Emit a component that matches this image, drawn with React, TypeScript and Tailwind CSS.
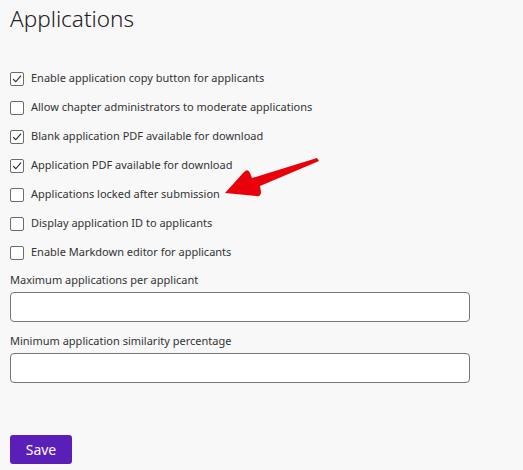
import React from 'react'

const options = [
  { label: 'Enable application copy button for applicants', checked: true },
  { label: 'Allow chapter administrators to moderate applications', checked: false },
  { label: 'Blank application PDF available for download', checked: true },
  { label: 'Application PDF available for download', checked: true },
  { label: 'Applications locked after submission', checked: false },
  { label: 'Display application ID to applicants', checked: false },
  { label: 'Enable Markdown editor for applicants', checked: false },
]

const CheckRow: React.FC<{ label: string; checked: boolean }> = ({ label, checked }) => (
  <label className="flex h-[29px] items-center gap-[7px]">
    <span className="flex h-[14px] w-[14px] items-center justify-center rounded-[2px] border border-[#6b6b6b] bg-white">
      {checked && (
        <svg viewBox="0 0 14 14" className="h-[12px] w-[12px]">
          <path d="M2.5 7.2 L5.6 10.2 L11.6 3" fill="none" stroke="#222" strokeWidth="1.3" />
        </svg>
      )}
    </span>
    <span className="text-[11px] text-[#333]">{label}</span>
  </label>
)

const Field: React.FC<{ label: string }> = ({ label }) => (
  <div className="flex flex-col">
    <span className="text-[11px] leading-[16px] text-[#333]">{label}</span>
    <input className="mt-[4px] h-[30px] w-[460px] rounded-[4px] border border-[#777] bg-white" />
  </div>
)

export default function App() {
  return (
    <div
      className="relative h-[470px] w-[523px] bg-[#f8f8f8] px-[10px]"
      style={{ fontFamily: '"Noto Sans", "Open Sans", sans-serif' }}
    >
      <h1 className="pt-[1px] text-[22.5px] font-light leading-[36px] text-[#222]">Applications</h1>
      <div className="mt-[27px] flex flex-col">
        {options.map((o) => (
          <CheckRow key={o.label} label={o.label} checked={o.checked} />
        ))}
      </div>
      <div className="mt-[5px] flex flex-col gap-[11px]">
        <Field label="Maximum applications per applicant" />
        <Field label="Minimum application similarity percentage" />
      </div>
      <button className="mt-[52px] block h-[29px] w-[62px] rounded-[3px] bg-[#5a1fb8] text-[14px] text-white">
        Save
      </button>
      <svg className="absolute left-[215px] top-[150px]" width="110" height="55" viewBox="0 0 110 55">
        <path
          d="M10 43 L29 22 Q33 18 35 23 L37 28 L102 8 L104 11 L45 36 L46 42 Q46 47 41 46 Z"
          fill="#e8000b"
        />
      </svg>
    </div>
  )
}
